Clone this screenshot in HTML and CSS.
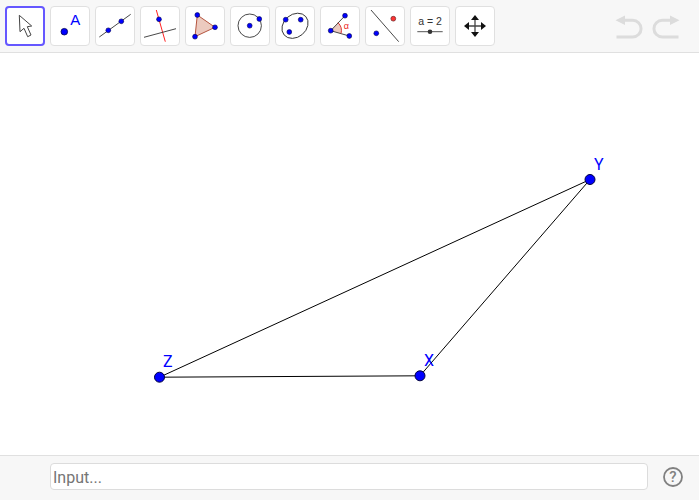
FILE: index.html
```html
<!DOCTYPE html>
<html lang="en">
<head>
<meta charset="utf-8">
<title>Geometry</title>
<link rel="stylesheet" href="styles.css">
</head>
<body>
<div class="app">
  <header class="toolbar">
    <div class="tools">
      <button class="tool active"><svg viewBox="0 0 40 40" class="ico"><path d="M14.300 9.300 L15 25.700 L19 22.300 L22.700 30.700 L26 29 L22.300 20.700 L26.700 20 Z" fill="#fff" stroke="#444" stroke-width="1"/></svg></button>
      <button class="tool"><svg viewBox="0 0 40 40" class="ico"><circle cx="14.300" cy="25.700" r="3.300" fill="#00f" stroke="#00004d" stroke-width=".8"/><text x="20.300" y="19.300" class="lab-a">A</text></svg></button>
      <button class="tool"><svg viewBox="0 0 40 40" class="ico"><path d="M4.300 31 L35.700 8.300" class="ln"/><circle cx="13.300" cy="24.300" r="2.400" class="pt"/><circle cx="26.300" cy="15.300" r="2.400" class="pt"/></svg></button>
      <button class="tool"><svg viewBox="0 0 40 40" class="ico"><path d="M16.300 4 L25.300 35.700" stroke="#f22" stroke-width="1" fill="none"/><path d="M4 31.300 L36 22.700" class="ln"/><circle cx="19" cy="13.300" r="2.400" class="pt"/></svg></button>
      <button class="tool"><svg viewBox="0 0 40 40" class="ico"><path d="M12.300 9 L10 30.700 L30 21.300 Z" fill="#eccabf" stroke="#b5553f" stroke-width="1"/><circle cx="12.300" cy="9" r="2.400" class="pt"/><circle cx="10" cy="30.700" r="2.400" class="pt"/><circle cx="30" cy="21.300" r="2.400" class="pt"/></svg></button>
      <button class="tool"><svg viewBox="0 0 40 40" class="ico"><circle cx="19.700" cy="19.700" r="11.700" fill="none" stroke="#333" stroke-width=".9"/><circle cx="19.700" cy="19.700" r="2.400" class="pt"/><circle cx="29.300" cy="13" r="2.400" class="pt"/></svg></button>
      <button class="tool"><svg viewBox="0 0 40 40" class="ico"><ellipse cx="20" cy="19.800" rx="14.200" ry="11.300" transform="rotate(-40 20 19.800)" fill="none" stroke="#333" stroke-width=".9"/><circle cx="10.700" cy="13.700" r="2.400" class="pt"/><circle cx="25.700" cy="13.700" r="2.400" class="pt"/><circle cx="14.300" cy="26" r="2.400" class="pt"/></svg></button>
      <button class="tool"><svg viewBox="0 0 40 40" class="ico"><path d="M10.700 24.700 L18 16.700 A11 11 0 0 1 21 27.500 Z" fill="#eccabf"/><path d="M10.700 24.700 L25 9.700 M10.700 24.700 L29.300 30" class="ln"/><path d="M18 16.700 A11 11 0 0 1 21 27.500" stroke="#d33" stroke-width="1" fill="none"/><circle cx="10.700" cy="24.700" r="2.400" class="pt"/><circle cx="25" cy="9.700" r="2.400" class="pt"/><circle cx="29.300" cy="30" r="2.400" class="pt"/><text x="23.800" y="23" class="lab-alpha">α</text></svg></button>
      <button class="tool"><svg viewBox="0 0 40 40" class="ico"><path d="M6 4 L33.700 35.700" class="ln"/><circle cx="11.300" cy="27.300" r="2.400" class="pt"/><circle cx="28.300" cy="12.700" r="2.400" fill="#f33" stroke="#622" stroke-width=".7"/></svg></button>
      <button class="tool"><svg viewBox="0 0 40 40" class="ico"><text x="20" y="19" class="lab-slider">a = 2</text><path d="M7.300 25.700 L32.700 25.700" stroke="#555" stroke-width="1"/><circle cx="20" cy="25.700" r="2.300" fill="#333"/></svg></button>
      <button class="tool"><svg viewBox="0 0 40 40" class="ico"><path d="M20 13 L20 27 M13 20 L27 20" stroke="#444" stroke-width="1.300"/><path d="M20 9 L24 14 L16 14 Z M20 31 L24 26 L16 26 Z M9 20 L14 16 L14 24 Z M31 20 L26 16 L26 24 Z" fill="#111"/></svg></button>
    </div>
    <div class="history">
      <svg viewBox="0 0 30 26" class="undo"><path d="M1.500 6.300 L11 1.500 L11 11 Z" fill="#dcdcdc"/><path d="M10 6.300 L18.700 6.300 A8.350 8.350 0 0 1 18.700 23 L2.500 23" fill="none" stroke="#dcdcdc" stroke-width="3"/></svg>
      <svg viewBox="0 0 30 26" class="undo"><path d="M28.500 6.300 L19 1.500 L19 11 Z" fill="#dcdcdc"/><path d="M20 6.300 L11.300 6.300 A8.350 8.350 0 0 0 11.300 23 L27.500 23" fill="none" stroke="#dcdcdc" stroke-width="3"/></svg>
    </div>
  </header>
  <main class="canvas">
    <svg class="board" viewBox="0 0 699 402">
      <g class="seg">
        <path d="M159.500 324.200 L420 322.800 M159.500 324.200 L590 126.500 M420 322.800 L590 126.500"/>
      </g>
      <circle cx="159.500" cy="324.200" r="5" class="vertex"/>
      <circle cx="420" cy="322.800" r="5" class="vertex"/>
      <circle cx="590" cy="126.500" r="5" class="vertex"/>
      <text x="163" y="313.500" class="vlabel">Z</text>
      <text x="424" y="313" class="vlabel">X</text>
      <text x="594" y="116.500" class="vlabel">Y</text>
    </svg>
  </main>
  <footer class="inputbar">
    <div class="field">Input...</div>
    <svg viewBox="0 0 24 24" class="help"><circle cx="12" cy="12" r="9" fill="none" stroke="#808080" stroke-width="1.800"/><text x="12" y="17.300" class="q">?</text></svg>
  </footer>
</div>
</body>
</html>
```

FILE: styles.css
```css
html, body {
  margin: 0;
  padding: 0;
  background: #fff;
  overflow: hidden;
}
.app {
  width: 699px;
  height: 500px;
  display: flex;
  flex-direction: column;
  font-family: Roboto, "Liberation Sans", sans-serif;
}
.toolbar {
  height: 52px;
  flex: none;
  display: flex;
  justify-content: space-between;
  background: #f7f7f7;
  border-bottom: 1px solid #e0e0e0;
  box-sizing: content-box;
}
.tools {
  display: flex;
  gap: 5px;
  padding: 6px 0 0 5px;
}
.tool {
  width: 40px;
  height: 40px;
  padding: 0;
  border: 1px solid #e0e0e0;
  border-radius: 4px;
  background: #fff;
  box-sizing: border-box;
  display: flex;
  align-items: center;
  justify-content: center;
}
.tool.active {
  border: 2px solid #6557ff;
}
.ico {
  width: 40px;
  height: 40px;
  flex: none;
}
.ln { stroke: #333; stroke-width: .9; fill: none; }
.pt { fill: #00f; stroke: #00004d; stroke-width: .6; }
.lab-a { font-size: 15px; fill: #00f; }
.lab-alpha { font-size: 9px; font-weight: 500; fill: #e22; }
.lab-slider { font-size: 10.500px; fill: #333; text-anchor: middle; }
.history {
  display: flex;
  gap: 7px;
  padding: 14px 18px 0 0;
}
.undo {
  width: 30px;
  height: 26px;
}
.canvas {
  flex: 1;
  min-height: 0;
}
.board {
  display: block;
  width: 699px;
  height: 402px;
}
.seg path {
  stroke: #000;
  stroke-width: 1;
  fill: none;
}
.vertex {
  fill: #00f;
  stroke: #00003f;
  stroke-width: 1;
}
.vlabel {
  font-size: 16px;
  fill: #00f;
}
.inputbar {
  height: 45px;
  flex: none;
  display: flex;
  align-items: flex-start;
  background: #f7f7f7;
  border-top: 1px solid #e0e0e0;
  padding: 7px 0 0 50px;
  box-sizing: border-box;
}
.field {
  width: 598px;
  height: 27px;
  box-sizing: border-box;
  background: #fff;
  border: 1px solid #dcdcdc;
  border-radius: 4px;
  padding-left: 2px;
  font-size: 16px;
  line-height: 27px;
  color: #757575;
}
.help {
  width: 24px;
  height: 24px;
  margin: 1.500px 0 0 13px;
}
.q {
  font-size: 15px;
  font-weight: 500;
  fill: #808080;
  text-anchor: middle;
}
```
